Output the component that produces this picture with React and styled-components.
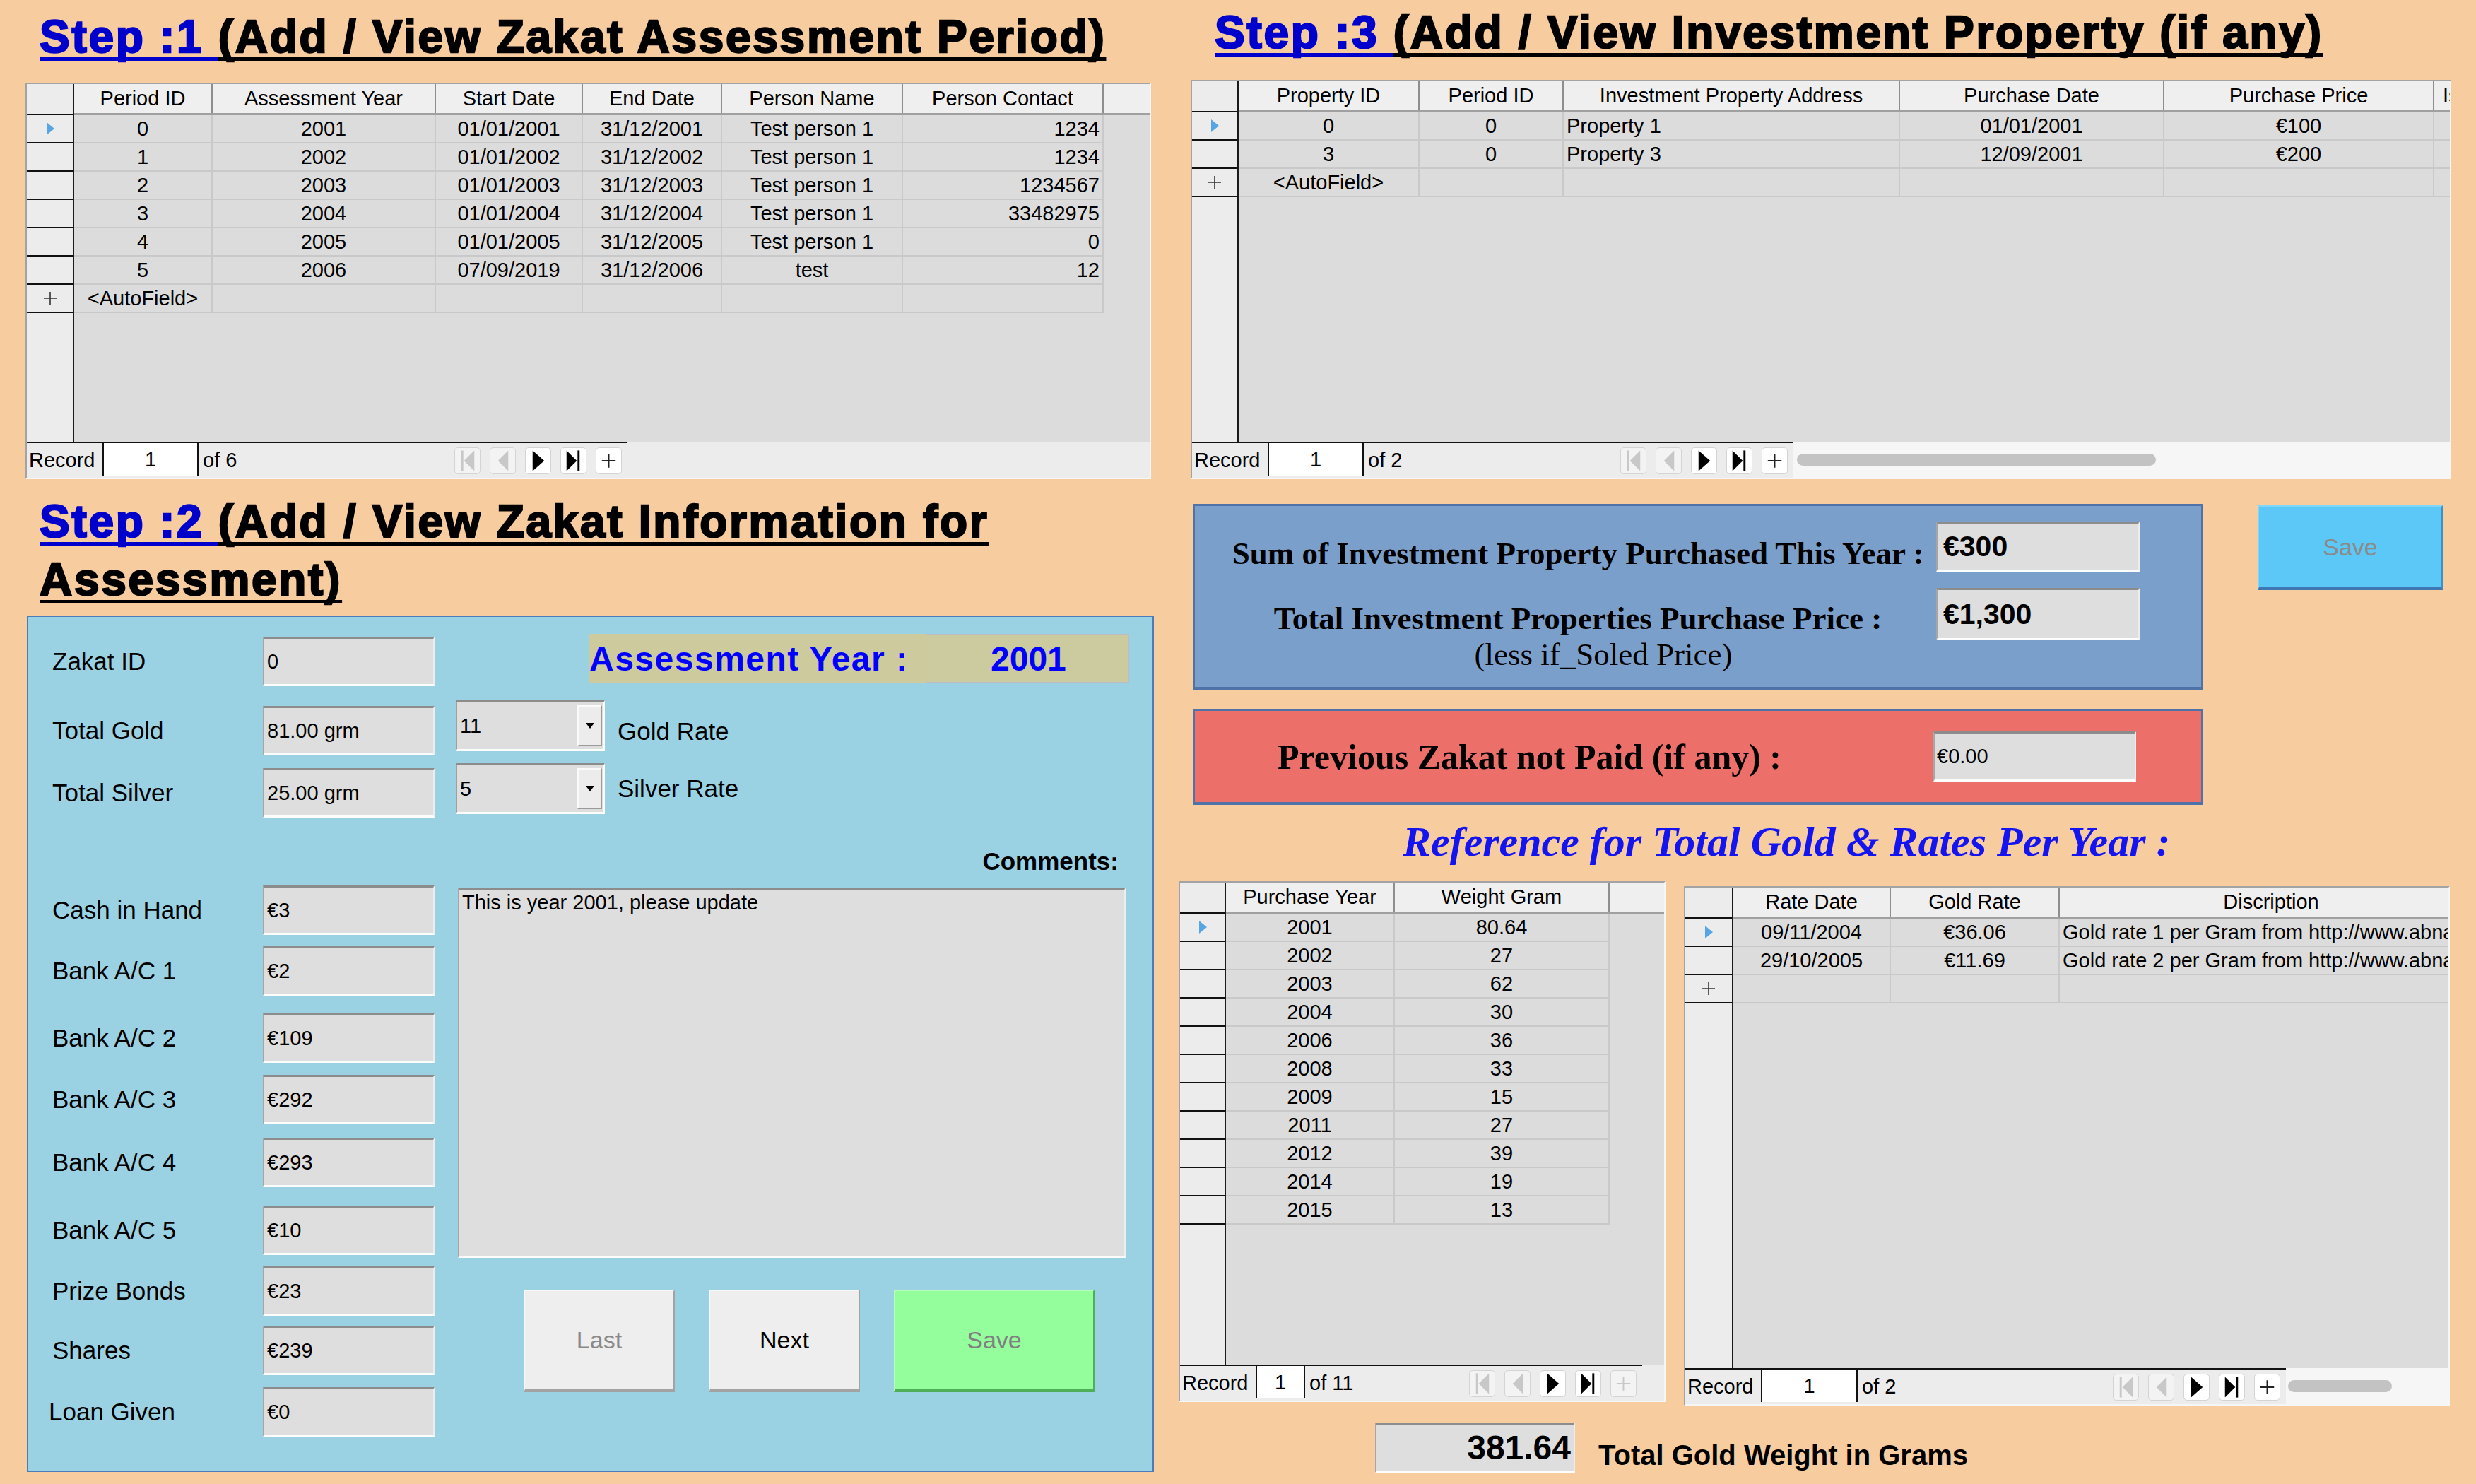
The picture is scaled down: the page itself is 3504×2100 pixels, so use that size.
import React from 'react';
import styled, { createGlobalStyle } from 'styled-components';

const GlobalStyle = createGlobalStyle`
  html, body { margin: 0; padding: 0; }
  body {
    background: #f7cda0;
    font-family: "Liberation Sans", Arial, sans-serif;
    color: #000;
    width: 3504px;
    height: 2100px;
    overflow: hidden;
  }
  * { box-sizing: border-box; }
`;

const Page = styled.div`
  display: flex;
  gap: 32px;
  padding-left: 36px;
  width: 3504px;
  height: 2100px;
`;

const Column = styled.div`
  width: ${p => p.$w}px;
  flex: none;
  display: flex;
  flex-direction: column;
  align-items: flex-start;
`;

/* ---------- titles ---------- */
const StepTitle = styled.h1`
  margin: ${p => p.$mt}px 0 0 ${p => p.$ml}px;
  width: ${p => p.$w}px;
  font-family: "Liberation Sans", Arial, sans-serif;
  font-weight: 700;
  font-size: 64px;
  line-height: ${p => p.$lh}px;
  letter-spacing: 2.7px;
`;

const TitlePart = styled.span`
  color: ${p => (p.$blue ? '#0000cc' : '#000')};
  -webkit-text-stroke: 2.4px currentColor;
  text-decoration: underline;
  text-decoration-thickness: 5px;
  text-underline-offset: 7px;
  text-decoration-skip-ink: none;
`;

/* ---------- data grid ---------- */
const GridFrame = styled.div`
  width: ${p => p.$w}px;
  height: ${p => p.$h}px;
  margin: ${p => p.$mt}px 0 0 ${p => p.$ml}px;
  border: 2px solid;
  border-color: #a3a3a3 #f6f6f6 #f6f6f6 #a3a3a3;
  background: #dcdcdc;
  display: flex;
  flex-direction: column;
  font-family: "Liberation Sans", Arial, sans-serif;
  font-size: 29px;
  overflow: hidden;
`;

const GridBody = styled.div`
  flex: 1;
  display: flex;
  min-height: 0;
`;

const SelectorCol = styled.div`
  width: ${p => p.$w}px;
  flex: none;
  background: #ececec;
  border-right: 2px solid #1a1a1a;
`;

const SelHead = styled.div`
  height: 44px;
  border-bottom: 2px solid #111;
`;

const SelCell = styled.div`
  height: 40px;
  border-bottom: 2px solid #111;
  display: flex;
  align-items: center;
  justify-content: center;
`;

const DataArea = styled.div`
  flex: 1;
  min-width: 0;
  overflow: hidden;
`;

const HeadRow = styled.div`
  display: flex;
  height: 44px;
  background: #efefef;
  border-bottom: 3px solid #a0a0a0;
`;

const HeadCell = styled.div`
  width: ${p => p.$w}px;
  flex: none;
  border-right: 2px solid #8e8e8e;
  display: flex;
  align-items: center;
  justify-content: ${p => (p.$align === 'left' ? 'flex-start' : 'center')};
  padding: 0 ${p => (p.$align === 'left' ? 12 : 4)}px;
  white-space: nowrap;
  overflow: hidden;
`;

const DataRow = styled.div`
  display: flex;
  height: 40px;
`;

const DataCell = styled.div`
  width: ${p => p.$w}px;
  flex: none;
  border-right: 2px solid #c9c9c9;
  border-bottom: 2px solid #c9c9c9;
  display: flex;
  align-items: center;
  justify-content: ${p => ({ left: 'flex-start', right: 'flex-end', center: 'center' }[p.$align])};
  padding: 0 ${p => (p.$align === 'center' ? 2 : 4)}px;
  white-space: nowrap;
  overflow: hidden;
`;

const NavBar = styled.div`
  height: 51px;
  flex: none;
  display: flex;
  background: #ececec;
`;

const NavMain = styled.div`
  width: ${p => p.$w}px;
  flex: none;
  display: flex;
  align-items: stretch;
  border-top: 2px solid #111;
  padding-right: 8px;
`;

const RecLabel = styled.div`
  width: 107px;
  flex: none;
  padding-left: 3px;
  display: flex;
  align-items: center;
`;

const RecBox = styled.div`
  width: ${p => p.$w}px;
  flex: none;
  margin-bottom: 3px;
  background: #fff;
  border-left: 2px solid #111;
  border-right: 2px solid #111;
  display: flex;
  align-items: center;
  justify-content: center;
`;

const OfText = styled.div`
  flex: 1;
  padding-left: 6px;
  display: flex;
  align-items: center;
`;

const NavBtns = styled.div`
  display: flex;
  gap: 13px;
  align-items: center;
`;

const NavBtn = styled.div`
  width: 37px;
  height: 38px;
  border: 1px solid #d4d4d4;
  border-radius: 5px;
  background: ${p => (p.$off ? '#f3f3f3' : '#fff')};
  display: flex;
  align-items: center;
  justify-content: center;
`;

const ScrollZone = styled.div`
  flex: 1;
  background: ${p => p.$bg};
  display: flex;
  align-items: center;
`;

const Thumb = styled.div`
  width: ${p => p.$w}px;
  margin-left: ${p => p.$ml}px;
  height: 17px;
  border-radius: 9px;
  background: #c3c3c3;
`;

function NavGlyph({ kind, off }) {
  const c = off ? '#c8c8c8' : '#000';
  if (kind === 'first')
    return (
      <svg width="36" height="38" viewBox="0 0 36 38">
        <rect x="9" y="4" width="3" height="30" fill={c} />
        <polygon points="28,4 13,19 28,34" fill={c} />
      </svg>
    );
  if (kind === 'prev')
    return (
      <svg width="36" height="38" viewBox="0 0 36 38">
        <polygon points="26,4 11,19 26,34" fill={c} />
      </svg>
    );
  if (kind === 'next')
    return (
      <svg width="36" height="38" viewBox="0 0 36 38">
        <polygon points="10,4 27,19 10,34" fill={c} />
      </svg>
    );
  if (kind === 'last')
    return (
      <svg width="36" height="38" viewBox="0 0 36 38">
        <polygon points="8,4 23,19 8,34" fill={c} />
        <rect x="24" y="4" width="3" height="30" fill={c} />
      </svg>
    );
  return (
    <svg width="36" height="38" viewBox="0 0 36 38">
      <path d="M18 9V29M8 19H28" stroke={off ? '#c8c8c8' : '#222'} strokeWidth="2" fill="none" />
    </svg>
  );
}

function CurrentMark() {
  return (
    <svg width="16" height="22" viewBox="0 0 16 22">
      <polygon points="3,2 14,11 3,20" fill="#56a6e4" />
    </svg>
  );
}

function NewMark() {
  return (
    <svg width="20" height="20" viewBox="0 0 20 20">
      <path d="M10 1V19M1 10H19" stroke="#333" strokeWidth="1.6" fill="none" />
    </svg>
  );
}

function DataGrid({ cfg }) {
  const { w, h, mt, ml, selW, cols, rows, newRow, nav } = cfg;
  return (
    <GridFrame $w={w} $h={h} $mt={mt} $ml={ml}>
      <GridBody>
        <SelectorCol $w={selW}>
          <SelHead />
          {rows.map((r, i) => (
            <SelCell key={i}>{i === 0 && <CurrentMark />}</SelCell>
          ))}
          {newRow !== undefined && (
            <SelCell>
              <NewMark />
            </SelCell>
          )}
        </SelectorCol>
        <DataArea>
          <HeadRow>
            {cols.map(c => (
              <HeadCell key={c.h} $w={c.w} $align={c.ha}>
                {c.h}
              </HeadCell>
            ))}
          </HeadRow>
          {rows.map((r, i) => (
            <DataRow key={i}>
              {cols.map((c, j) => (
                <DataCell key={j} $w={c.w} $align={c.a}>
                  {r[j]}
                </DataCell>
              ))}
            </DataRow>
          ))}
          {newRow !== undefined && (
            <DataRow>
              {cols.map((c, j) => (
                <DataCell key={j} $w={c.w} $align="center">
                  {j === 0 ? newRow : ''}
                </DataCell>
              ))}
            </DataRow>
          )}
        </DataArea>
      </GridBody>
      <NavBar>
        <NavMain $w={nav.lineW}>
          <RecLabel>Record</RecLabel>
          <RecBox $w={nav.boxW}>1</RecBox>
          <OfText>of {nav.total}</OfText>
          <NavBtns>
            <NavBtn $off>
              <NavGlyph kind="first" off />
            </NavBtn>
            <NavBtn $off>
              <NavGlyph kind="prev" off />
            </NavBtn>
            <NavBtn>
              <NavGlyph kind="next" />
            </NavBtn>
            <NavBtn>
              <NavGlyph kind="last" />
            </NavBtn>
            <NavBtn $off={nav.plusOff}>
              <NavGlyph kind="plus" off={nav.plusOff} />
            </NavBtn>
          </NavBtns>
        </NavMain>
        <ScrollZone $bg={nav.zoneBg}>
          {nav.thumb && <Thumb $w={nav.thumb.w} $ml={nav.thumb.ml} />}
        </ScrollZone>
      </NavBar>
    </GridFrame>
  );
}

const periodGrid = {
  w: 1593, h: 561, mt: 25, ml: 0, selW: 67,
  cols: [
    { h: 'Period ID', w: 196, a: 'center' },
    { h: 'Assessment Year', w: 316, a: 'center' },
    { h: 'Start Date', w: 208, a: 'center' },
    { h: 'End Date', w: 197, a: 'center' },
    { h: 'Person Name', w: 256, a: 'center' },
    { h: 'Person Contact', w: 284, a: 'right' },
  ],
  rows: [
    ['0', '2001', '01/01/2001', '31/12/2001', 'Test person 1', '1234'],
    ['1', '2002', '01/01/2002', '31/12/2002', 'Test person 1', '1234'],
    ['2', '2003', '01/01/2003', '31/12/2003', 'Test person 1', '1234567'],
    ['3', '2004', '01/01/2004', '31/12/2004', 'Test person 1', '33482975'],
    ['4', '2005', '01/01/2005', '31/12/2005', 'Test person 1', '0'],
    ['5', '2006', '07/09/2019', '31/12/2006', 'test', '12'],
  ],
  newRow: '<AutoField>',
  nav: { lineW: 850, boxW: 136, total: 6, zoneBg: '#ececec' },
};

const propertyGrid = {
  w: 1784, h: 565, mt: 27, ml: 20, selW: 66,
  cols: [
    { h: 'Property ID', w: 256, a: 'center' },
    { h: 'Period ID', w: 204, a: 'center' },
    { h: 'Investment Property Address', w: 476, a: 'left' },
    { h: 'Purchase Date', w: 374, a: 'center' },
    { h: 'Purchase Price', w: 382, a: 'center' },
    { h: 'Is Sold', w: 120, a: 'center', ha: 'left' },
  ],
  rows: [
    ['0', '0', 'Property 1', '01/01/2001', '€100', ''],
    ['3', '0', 'Property 3', '12/09/2001', '€200', ''],
  ],
  newRow: '<AutoField>',
  nav: { lineW: 851, boxW: 136, total: 2, zoneBg: '#f6f6f6', thumb: { w: 508, ml: 5 } },
};

const goldGrid = {
  w: 689, h: 737, mt: 0, ml: 0, selW: 65,
  cols: [
    { h: 'Purchase Year', w: 239, a: 'center' },
    { h: 'Weight Gram', w: 304, a: 'center' },
  ],
  rows: [
    ['2001', '80.64'], ['2002', '27'], ['2003', '62'], ['2004', '30'],
    ['2006', '36'], ['2008', '33'], ['2009', '15'], ['2011', '27'],
    ['2012', '39'], ['2014', '19'], ['2015', '13'],
  ],
  nav: { lineW: 654, boxW: 70, total: 11, zoneBg: '#ececec', plusOff: true },
};

const rateGrid = {
  w: 1084, h: 735, mt: 7, ml: 0, selW: 68,
  cols: [
    { h: 'Rate Date', w: 223, a: 'center' },
    { h: 'Gold Rate', w: 239, a: 'center' },
    { h: 'Discription', w: 600, a: 'left' },
  ],
  rows: [
    ['09/11/2004', '€36.06', 'Gold rate 1 per Gram from http://www.abnamro.com'],
    ['29/10/2005', '€11.69', 'Gold rate 2 per Gram from http://www.abnamro.com'],
  ],
  newRow: '',
  nav: { lineW: 850, boxW: 137, total: 2, zoneBg: '#f6f6f6', thumb: { w: 147, ml: 3 } },
};

/* ---------- zakat form ---------- */
const FormPanel = styled.div`
  margin: 10px 0 0 2px;
  width: 1595px;
  height: 1212px;
  background: #9ad1e3;
  border: 2px solid #4c7cb8;
  display: flex;
  padding-left: 34px;
  font-family: "Liberation Sans", Arial, sans-serif;
`;

const FieldsCol = styled.div`
  width: 541px;
  flex: none;
  display: flex;
  flex-direction: column;
`;

const FieldRow = styled.div`
  margin-top: ${p => p.$mt}px;
  display: grid;
  grid-template-columns: 298px 243px;
  align-items: center;
  height: 70px;
`;

const FieldLabel = styled.div`
  font-size: 35px;
  margin-left: ${p => p.$shift || 0}px;
  white-space: nowrap;
`;

const TextBox = styled.div`
  height: ${p => p.$h || 70}px;
  background: #dedede;
  border-top: 3px solid #8c8c8c;
  border-left: 2px solid #a6a6a6;
  border-right: 2px solid #ededed;
  border-bottom: 3px solid #fdfdfd;
  display: flex;
  align-items: center;
  justify-content: ${p => (p.$right ? 'flex-end' : 'flex-start')};
  padding: 0 ${p => (p.$right ? 4 : 0)}px 0 ${p => p.$pl || 4}px;
  font-family: "Liberation Sans", Arial, sans-serif;
  font-style: normal;
  font-size: ${p => p.$fs || 29}px;
  font-weight: ${p => (p.$bold ? 700 : 400)};
  width: ${p => (p.$w ? `${p.$w}px` : 'auto')};
  flex: none;
  white-space: nowrap;
`;

const SideCol = styled.div`
  margin-left: 30px;
  width: 953px;
  flex: none;
  display: flex;
  flex-direction: column;
`;

const YearBanner = styled.div`
  margin: 24px 0 0 189px;
  width: 764px;
  height: 70px;
  display: flex;
  color: #0000ff;
  font-weight: 700;
  font-size: 48px;
`;

const YearLabel = styled.div`
  width: 477px;
  background: #cdcb9e;
  display: flex;
  align-items: center;
  white-space: nowrap;
  letter-spacing: 1.5px;
`;

const YearValue = styled.div`
  flex: 1;
  background: #cccb9f;
  border: 2px solid #bdbcc4;
  border-left: none;
  display: flex;
  align-items: center;
  padding-left: 91px;
`;

const RateRow = styled.div`
  margin-top: ${p => p.$mt}px;
  display: flex;
  align-items: center;
  gap: 18px;
`;

const Combo = styled.div`
  width: 211px;
  height: 72px;
  display: flex;
  background: #dedede;
  border-top: 3px solid #8c8c8c;
  border-left: 2px solid #a0a0a0;
  border-right: 2px solid #fdfdfd;
  border-bottom: 3px solid #fdfdfd;
`;

const ComboText = styled.div`
  flex: 1;
  display: flex;
  align-items: center;
  padding-left: 4px;
  font-size: 29px;
`;

const ComboBtn = styled.div`
  width: 35px;
  margin: 4px 2px 4px 0;
  background: #ececec;
  border: 2px solid;
  border-color: #fafafa #9a9a9a #9a9a9a #fafafa;
  display: flex;
  align-items: center;
  justify-content: center;
`;

const RateLabel = styled.div`
  font-size: 35px;
  padding-top: ${p => p.$dy || 0}px;
`;

const CommentsLabel = styled.div`
  margin-top: 47px;
  padding-right: 15px;
  text-align: right;
  font-weight: 700;
  font-size: 35px;
  line-height: 40px;
`;

const CommentsBox = styled.div`
  margin: 17px 0 0 3px;
  width: 945px;
  height: 524px;
  background: #dedede;
  border-top: 3px solid #8c8c8c;
  border-left: 2px solid #a6a6a6;
  border-right: 2px solid #ededed;
  border-bottom: 3px solid #fdfdfd;
  padding: 2px 4px;
  font-size: 29px;
`;

const ButtonRow = styled.div`
  margin: 45px 0 0 96px;
  display: flex;
  gap: 48px;
`;

const FormButton = styled.div`
  width: ${p => p.$w}px;
  height: 145px;
  background: ${p => p.$bg};
  color: ${p => p.$fg};
  border-top: 2px solid ${p => p.$hi};
  border-left: 2px solid ${p => p.$hi};
  border-right: 2px solid ${p => p.$lo};
  border-bottom: 4px solid ${p => p.$lo};
  display: flex;
  align-items: center;
  justify-content: center;
  font-size: 34px;
`;

function ComboArrow() {
  return (
    <svg width="14" height="10" viewBox="0 0 14 10">
      <polygon points="1,1 13,1 7,9" fill="#000" />
    </svg>
  );
}

const fields = [
  { label: 'Zakat ID', value: '0', mt: 28 },
  { label: 'Total Gold', value: '81.00 grm', mt: 28 },
  { label: 'Total Silver', value: '25.00 grm', mt: 18 },
  { label: 'Cash in Hand', value: '€3', mt: 96 },
  { label: 'Bank A/C 1', value: '€2', mt: 16 },
  { label: 'Bank A/C 2', value: '€109', mt: 25 },
  { label: 'Bank A/C 3', value: '€292', mt: 17 },
  { label: 'Bank A/C 4', value: '€293', mt: 19 },
  { label: 'Bank A/C 5', value: '€10', mt: 26 },
  { label: 'Prize Bonds', value: '€23', mt: 16 },
  { label: 'Shares', value: '€239', mt: 14 },
  { label: 'Loan Given', value: '€0', mt: 17, shift: -5 },
];

/* ---------- right side panels ---------- */
const SummaryRow = styled.div`
  margin: 35px 0 0 24px;
  display: flex;
  align-items: flex-start;
  gap: 78px;
`;

const InfoPanel = styled.div`
  width: 1428px;
  height: ${p => p.$h}px;
  background: ${p => p.$bg};
  border: 2px solid #4f72a8;
  border-top-width: 3px;
  border-bottom-width: 4px;
  font-family: "Liberation Serif", "Times New Roman", serif;
  font-weight: 700;
`;

const SumList = styled.div`
  padding-left: 51px;
  display: flex;
  flex-direction: column;
`;

const SumRow = styled.div`
  margin-top: ${p => p.$mt}px;
  display: flex;
  align-items: flex-start;
  gap: 16px;
`;

const SumLabel = styled.div`
  width: 982px;
  padding-top: ${p => p.$pt}px;
  text-align: center;
  font-size: 45px;
  line-height: 51px;
  white-space: nowrap;
`;

const SumNote = styled.span`
  display: block;
  padding-left: 72px;
  font-weight: 400;
`;

const SaveBlue = styled.div`
  margin-top: 2px;
  width: 262px;
  height: 120px;
  background: #5cc8f7;
  border-top: 2px solid #7fd6fb;
  border-left: 2px solid #7fd6fb;
  border-right: 2px solid #3f8fc8;
  border-bottom: 4px solid #3d78b4;
  color: #8a8a8a;
  font-family: "Liberation Sans", Arial, sans-serif;
  font-size: 34px;
  display: flex;
  align-items: center;
  justify-content: center;
`;

const DuePanel = styled(InfoPanel)`
  margin: 27px 0 0 24px;
  display: flex;
  align-items: center;
  padding-left: 117px;
`;

const DueLabel = styled.div`
  width: 928px;
  font-size: 50px;
  white-space: nowrap;
`;

const RefTitle = styled.h2`
  margin: 17px 0 0 320px;
  font-family: "Liberation Serif", "Times New Roman", serif;
  font-weight: 700;
  font-style: italic;
  font-size: 60px;
  line-height: 70px;
  color: #1414f0;
  white-space: nowrap;
`;

const RefTables = styled.div`
  margin: 21px 0 0 3px;
  display: flex;
  align-items: flex-start;
  gap: 26px;
`;

const TotalRow = styled.div`
  margin: 24px 0 0 281px;
  display: flex;
  align-items: center;
  gap: 33px;
`;

const TotalLabel = styled.div`
  margin-top: 22px;
  font-weight: 700;
  font-size: 40px;
  white-space: nowrap;
`;

export default function App() {
  return (
    <>
      <GlobalStyle />
      <Page>
        <Column $w={1597}>
          <StepTitle $mt={12} $ml={20} $lh={80} $w={1570}>
            <TitlePart $blue>Step :1 </TitlePart>
            <TitlePart>(Add / View Zakat Assessment Period)</TitlePart>
          </StepTitle>
          <DataGrid cfg={periodGrid} />
          <StepTitle $mt={19} $ml={20} $lh={82} $w={1500}>
            <TitlePart $blue>Step :2 </TitlePart>
            <TitlePart>(Add / View Zakat Information for Assessment)</TitlePart>
          </StepTitle>
          <FormPanel>
            <FieldsCol>
              {fields.map(f => (
                <FieldRow key={f.label} $mt={f.mt}>
                  <FieldLabel $shift={f.shift}>{f.label}</FieldLabel>
                  <TextBox>{f.value}</TextBox>
                </FieldRow>
              ))}
            </FieldsCol>
            <SideCol>
              <YearBanner>
                <YearLabel>Assessment Year :</YearLabel>
                <YearValue>2001</YearValue>
              </YearBanner>
              <RateRow $mt={24}>
                <Combo>
                  <ComboText>11</ComboText>
                  <ComboBtn>
                    <ComboArrow />
                  </ComboBtn>
                </Combo>
                <RateLabel $dy={16}>Gold Rate</RateLabel>
              </RateRow>
              <RateRow $mt={17}>
                <Combo>
                  <ComboText>5</ComboText>
                  <ComboBtn>
                    <ComboArrow />
                  </ComboBtn>
                </Combo>
                <RateLabel>Silver Rate</RateLabel>
              </RateRow>
              <CommentsLabel>Comments:</CommentsLabel>
              <CommentsBox>This is year 2001, please update</CommentsBox>
              <ButtonRow>
                <FormButton $w={214} $bg="#eeeeee" $fg="#8a8a8a" $hi="#f8f8f8" $lo="#a3a3a3">
                  Last
                </FormButton>
                <FormButton $w={214} $bg="#eeeeee" $fg="#000" $hi="#f8f8f8" $lo="#a3a3a3">
                  Next
                </FormButton>
                <FormButton $w={284} $bg="#94fe9d" $fg="#808080" $hi="#b8ffbd" $lo="#4fae5a">
                  Save
                </FormButton>
              </ButtonRow>
            </SideCol>
          </FormPanel>
        </Column>

        <Column $w={1804}>
          <StepTitle $mt={6} $ml={54} $lh={80} $w={1745}>
            <TitlePart $blue>Step :3 </TitlePart>
            <TitlePart>(Add / View Investment Property (if any)</TitlePart>
          </StepTitle>
          <DataGrid cfg={propertyGrid} />
          <SummaryRow>
            <InfoPanel $h={263} $bg="#7b9fcb">
              <SumList>
                <SumRow $mt={22}>
                  <SumLabel $pt={20}>Sum of Investment Property Purchased This Year :</SumLabel>
                  <TextBox $w={288} $h={71} $fs={41} $bold $pl={8}>
                    €300
                  </TextBox>
                </SumRow>
                <SumRow $mt={23}>
                  <SumLabel $pt={18}>
                    Total Investment Properties Purchase Price :
                    <SumNote>(less if_Soled Price)</SumNote>
                  </SumLabel>
                  <TextBox $w={288} $h={74} $fs={41} $bold $pl={8}>
                    €1,300
                  </TextBox>
                </SumRow>
              </SumList>
            </InfoPanel>
            <SaveBlue>Save</SaveBlue>
          </SummaryRow>
          <DuePanel $h={136} $bg="#ec6f6a">
            <DueLabel>Previous Zakat not Paid (if any) :</DueLabel>
            <TextBox $w={287} $h={71} $pl={3}>
              €0.00
            </TextBox>
          </DuePanel>
          <RefTitle>Reference for Total Gold &amp; Rates Per Year :</RefTitle>
          <RefTables>
            <DataGrid cfg={goldGrid} />
            <DataGrid cfg={rateGrid} />
          </RefTables>
          <TotalRow>
            <TextBox $w={283} $h={71} $fs={48} $bold $right>
              381.64
            </TextBox>
            <TotalLabel>Total Gold Weight in Grams</TotalLabel>
          </TotalRow>
        </Column>
      </Page>
    </>
  );
}
